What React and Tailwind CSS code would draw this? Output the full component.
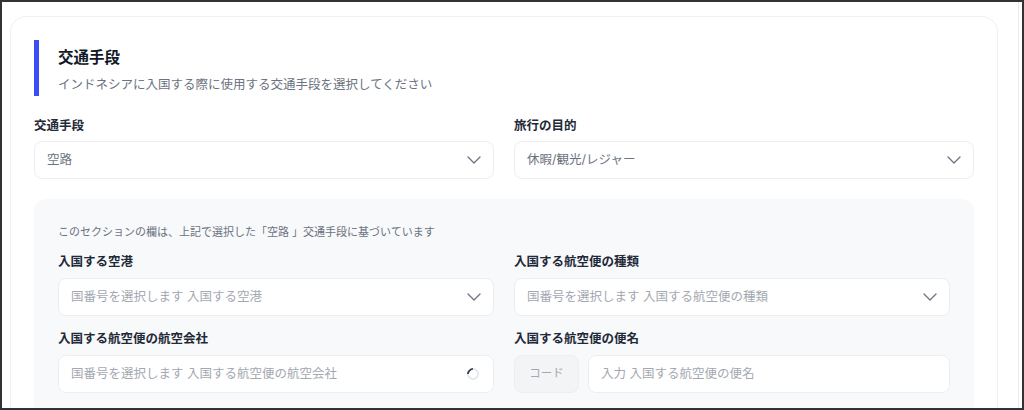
const font = { fontFamily: 'Inter, "Noto Sans CJK JP", sans-serif' };

function Chevron() {
  return (
    <svg width="14" height="8" viewBox="0 0 14 8" fill="none" className="flex-shrink-0">
      <polyline points="1,1 7,7 13,1" stroke="#6b7280" strokeWidth="1.3" strokeLinecap="round" strokeLinejoin="round" />
    </svg>
  );
}

function SelectBox({ value, placeholder }) {
  return (
    <div className="h-[38px] bg-white border border-[#eceef1] rounded-lg flex items-center justify-between pl-3 pr-3">
      {value ? (
        <span className="text-[12.5px] text-[#6b7280]">{value}</span>
      ) : (
        <span className="text-[12.5px] text-[#a3a8b0]">{placeholder}</span>
      )}
      <Chevron />
    </div>
  );
}

export default function App() {
  return (
    <div style={font} className="w-[1024px] h-[410px] border-2 border-[#333] bg-white overflow-hidden flex">
      {/* ── Main ── */}
      <main className="flex-1 pl-2 pt-[14px]">
        <section className="w-[988px] bg-white border border-[#eff0f2] rounded-2xl px-[23px] pt-[23px] pb-6">
          {/* Header */}
          <div className="border-l-[5px] border-[#3a4ef5] pl-[19px] pt-[6px] pb-px mb-5">
            <h2 className="text-[15.5px] leading-6 font-bold text-[#111827]">交通手段</h2>
            <p className="mt-[5px] text-[12.5px] leading-5 text-[#6b7280]">インドネシアに入国する際に使用する交通手段を選択してください</p>
          </div>

          {/* Top selects */}
          <div className="grid grid-cols-2 gap-5">
            <div>
              <p className="text-[12.5px] leading-5 font-semibold text-[#1f2937] mb-[5px]">交通手段</p>
              <SelectBox value="空路" />
            </div>
            <div>
              <p className="text-[12.5px] leading-5 font-semibold text-[#1f2937] mb-[5px]">旅行の目的</p>
              <SelectBox value="休暇/観光/レジャー" />
            </div>
          </div>

          {/* Air section */}
          <div className="mt-5 bg-[#f8f9fb] rounded-xl px-6 pt-[25px] pb-6">
            <p className="text-[11px] leading-4 text-[#6b7280] mb-3">このセクションの欄は、上記で選択した「空路 」交通手段に基づいています</p>
            <div className="grid grid-cols-2 gap-x-5 gap-y-[13px]">
              <div>
                <p className="text-[12.5px] leading-5 font-semibold text-[#1f2937] mb-[6px]">入国する空港</p>
                <SelectBox placeholder="国番号を選択します 入国する空港" />
              </div>
              <div>
                <p className="text-[12.5px] leading-5 font-semibold text-[#1f2937] mb-[6px]">入国する航空便の種類</p>
                <SelectBox placeholder="国番号を選択します 入国する航空便の種類" />
              </div>
              <div>
                <p className="text-[12.5px] leading-5 font-semibold text-[#1f2937] mb-[6px]">入国する航空便の航空会社</p>
                <div className="h-[38px] bg-white border border-[#eceef1] rounded-lg flex items-center justify-between pl-3 pr-3">
                  <span className="text-[12.5px] text-[#a3a8b0]">国番号を選択します 入国する航空便の航空会社</span>
                  <span className="w-3 h-3 rounded-full border-2 border-[#e5e7eb] border-t-[#374151] -rotate-45 mr-0.5" />
                </div>
              </div>
              <div>
                <p className="text-[12.5px] leading-5 font-semibold text-[#1f2937] mb-[6px]">入国する航空便の便名</p>
                <div className="flex gap-[9px]">
                  <div className="w-[65px] h-[38px] bg-[#f3f4f6] border border-[#eceef1] rounded-lg flex items-center justify-center">
                    <span className="text-[11.5px] text-[#a3a8b0]">コード</span>
                  </div>
                  <div className="flex-1 h-[38px] bg-white border border-[#eceef1] rounded-lg flex items-center pl-3">
                    <span className="text-[12.5px] text-[#a3a8b0]">入力 入国する航空便の便名</span>
                  </div>
                </div>
              </div>
            </div>
          </div>
        </section>
      </main>

      {/* scroll track edge */}
      <div className="w-1 border-l border-[#ececec]" />
    </div>
  );
}
